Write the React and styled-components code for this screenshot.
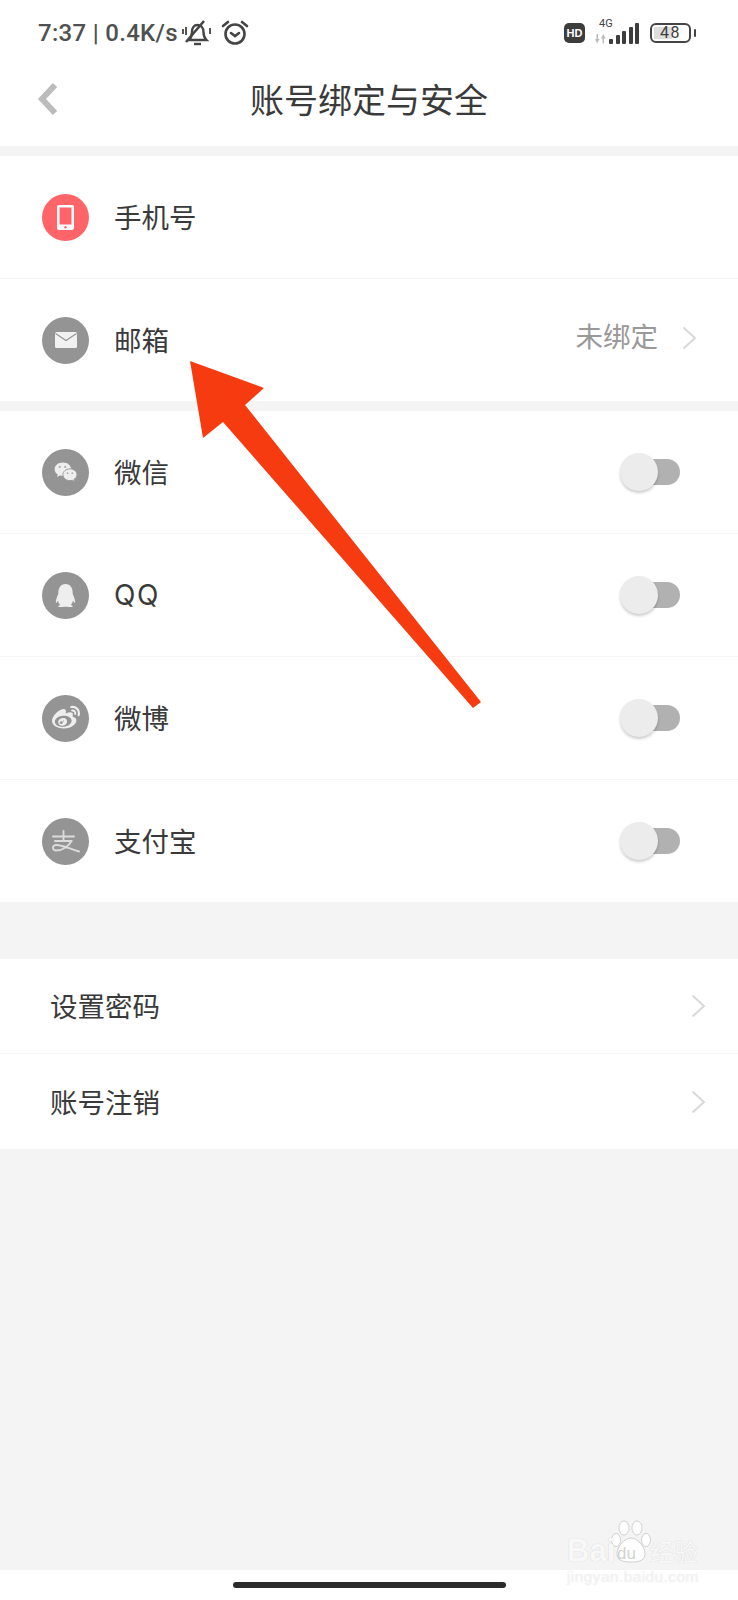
import React from 'react'
import styled, { createGlobalStyle } from 'styled-components'
import { FaQq, FaWeibo } from 'react-icons/fa'

const GlobalStyle = createGlobalStyle`
  html, body {
    margin: 0;
    padding: 0;
    background: #f4f4f4;
  }
  body {
    font-family: "Noto Sans CJK SC", "Noto Sans", sans-serif;
  }
`

const Page = styled.div`
  position: relative;
  width: 738px;
  height: 1600px;
  overflow: hidden;
  display: flex;
  flex-direction: column;
  background: #f4f4f4;
`

const Top = styled.header`
  background: #fff;
  height: 146px;
  flex: none;
`

const StatusBar = styled.div`
  height: 65px;
  padding: 0 47px 0 38px;
  display: flex;
  align-items: center;
  justify-content: space-between;
  color: #3d3d3d;
`

const StatusGroup = styled.div`
  display: flex;
  align-items: center;
`

const StatusText = styled.span`
  font-family: Roboto, "Liberation Sans", sans-serif;
  font-size: 24px;
  font-weight: 500;
  letter-spacing: 0.3px;
  line-height: 30px;
  color: #505050;
  margin-right: 3px;
`

const AlarmWrap = styled.span`
  display: flex;
  margin-left: 8px;
`

const HdBadge = styled.span`
  width: 21px;
  height: 20px;
  border-radius: 5px;
  background: #3d3d3d;
  color: #fff;
  font-family: "Liberation Sans", sans-serif;
  font-size: 11px;
  font-weight: 700;
  display: flex;
  align-items: center;
  justify-content: center;
`

const Signal = styled.div`
  position: relative;
  width: 45px;
  height: 23px;
  margin-left: 9px;
  display: flex;
  align-items: flex-end;
  justify-content: flex-end;
  gap: 2.5px;
`

const SignalLabel = styled.span`
  position: absolute;
  left: 5px;
  top: -4px;
  font-family: Roboto, sans-serif;
  font-size: 11px;
  line-height: 13px;
  color: #444;
`

const SignalArrows = styled.span`
  position: absolute;
  left: 0;
  bottom: 0;
  display: flex;
`

const SignalBar = styled.i`
  display: block;
  width: 4px;
  height: ${p => p.$h}px;
  border-radius: 1px;
  background: #3d3d3d;
`

const Battery = styled.div`
  position: relative;
  width: 37px;
  height: 16px;
  margin-left: 11px;
  border: 2.5px solid #454545;
  border-radius: 6px;
  display: flex;
  align-items: center;
  justify-content: center;
  font-family: Roboto, sans-serif;
  font-size: 16px;
  letter-spacing: 1.5px;
  color: #3d3d3d;

  &::before {
    content: '';
    position: absolute;
    left: 2px;
    top: 2px;
    bottom: 2px;
    width: 18px;
    background: #dedede;
  }

  &::after {
    content: '';
    position: absolute;
    right: -7px;
    top: 4px;
    width: 2.5px;
    height: 8px;
    border-radius: 1px;
    background: #454545;
  }
`

const BatteryLevel = styled.span`
  position: relative;
`

const NavBar = styled.div`
  position: relative;
  height: 81px;
  display: flex;
  align-items: flex-start;
  justify-content: center;
`

const BackIcon = styled.svg`
  position: absolute;
  left: 36px;
  top: 16px;
`

const Title = styled.h1`
  margin: 9px 0 0;
  font-size: 34px;
  font-weight: 400;
  line-height: 50px;
  color: #3a3a3a;
`

const Group = styled.section`
  background: #fff;
  margin-top: ${p => p.$top}px;
  flex: none;
`

const Row = styled.div`
  box-sizing: border-box;
  height: ${p => p.$height}px;
  padding: ${p => (p.$plain ? '0 32px 0 50px' : '0 32px 0 42px')};
  display: flex;
  align-items: center;
  border-bottom: 1px solid #f6f6f6;

  &:last-child {
    border-bottom: none;
  }
`

const IconCircle = styled.span`
  width: 47px;
  height: 47px;
  flex: none;
  margin-right: 25px;
  border-radius: 50%;
  background: ${p => p.$color || '#949494'};
  color: #fff;
  display: flex;
  align-items: center;
  justify-content: center;
`

const Label = styled.span`
  flex: 1;
  padding-bottom: 2px;
  font-size: 27.500px;
  line-height: 40px;
  color: #3a3a3a;
`

const LatinLabel = styled(Label)`
  padding-bottom: 0;
  font-family: Inter, "Noto Sans", sans-serif;
  font-size: 28px;
  letter-spacing: 1.500px;
`

const Value = styled.span`
  margin-right: 24px;
  margin-top: -10px;
  font-size: 27.500px;
  line-height: 40px;
  color: #999;
`

const Chevron = styled.svg`
  flex: none;
  margin-top: ${p => p.$shift || 0}px;
  margin-right: ${p => p.$inset || 0}px;
`

const Switch = styled.span`
  position: relative;
  width: 59px;
  height: 26px;
  margin-right: 26px;
  border-radius: 13px;
  background: #b1b1b1;
  flex: none;

  &::before {
    content: '';
    position: absolute;
    left: -1px;
    top: -6px;
    width: 38px;
    height: 38px;
    border-radius: 50%;
    background: #ececec;
    box-shadow: 0 2px 3px rgba(0, 0, 0, 0.2);
  }
`

const Filler = styled.div`
  flex: 1;
  background: #f4f4f4;
`

const HomeArea = styled.div`
  height: 30px;
  flex: none;
  background: #fff;
  display: flex;
  justify-content: center;
  padding-top: 12px;
  box-sizing: border-box;
`

const HomeBar = styled.span`
  width: 273px;
  height: 6px;
  border-radius: 3px;
  background: #2b2b2b;
`

const Callout = styled.svg`
  position: absolute;
  left: 0;
  top: 0;
  pointer-events: none;
`

const Watermark = styled.div`
  position: absolute;
  left: 567px;
  top: 1534px;
  width: 132px;
  color: rgba(255, 255, 255, 0.9);
  text-shadow: 0 0 1px rgba(170, 170, 170, 0.6);
`

const WatermarkLine = styled.div`
  position: relative;
  display: flex;
  align-items: center;
  height: 34px;
  font-family: "Liberation Sans", sans-serif;
  font-size: 31px;
  font-weight: 700;
  line-height: 34px;
`

const WatermarkDu = styled.span`
  position: absolute;
  left: 50px;
  top: 3px;
  z-index: 1;
  font-size: 17px;
  font-weight: 400;
  color: rgba(205, 205, 205, 0.9);
  text-shadow: none;
`

const WatermarkCn = styled.span`
  position: absolute;
  left: 83px;
  font-family: "Noto Sans CJK SC", sans-serif;
  font-size: 24px;
  font-weight: 400;
  white-space: nowrap;
`

const WatermarkPaw = styled.svg`
  position: absolute;
  left: 44px;
  top: -14px;
`

const WatermarkUrl = styled.div`
  font-family: "Liberation Sans", sans-serif;
  font-size: 15.500px;
  line-height: 18px;
  letter-spacing: 0.4px;
  white-space: nowrap;
  color: rgba(255, 255, 255, 0.6);
  text-shadow: 0 0 1px rgba(190, 190, 190, 0.5);
`

const MuteIcon = () => (
  <svg width="32" height="30" viewBox="0 0 32 30" fill="none" stroke="#454545" strokeWidth="2.4">
    <path d="M8 22c2-2 3-4 3-8 0-4 2-7 5.500-7s6 3 6 7c0 3 1 6 3 8z" />
    <path d="M5 24L23 3" strokeWidth="2.600" />
    <path d="M13 26h7" />
    <path d="M2 11v5M5 9v8M29 10v6" strokeWidth="1.800" />
  </svg>
)

const AlarmIcon = () => (
  <svg width="28" height="28" viewBox="0 0 28 28" fill="none" stroke="#454545" strokeWidth="2.600" strokeLinecap="round">
    <circle cx="14" cy="15" r="9.500" />
    <path d="M2 7l5-4M26 7l-5-4" />
    <path d="M10 14l4 3 4-3" />
  </svg>
)

const ArrowsIcon = () => (
  <svg width="12" height="10" viewBox="0 0 12 10" fill="#bbb">
    <path d="M1 5h1.500V0H4v5h1.500L3.200 9.500zM7 4.500h1.600v5H10v-5h1.500L9.300 0z" />
  </svg>
)

const BackArrow = () => (
  <BackIcon width="24" height="36" viewBox="0 0 24 36" fill="none">
    <path d="M19 4L6 18l13 14" stroke="#bcbcbc" strokeWidth="6" />
  </BackIcon>
)

const ChevronRight = ({ shift, inset }) => (
  <Chevron $shift={shift} $inset={inset} width="15" height="24" viewBox="0 0 15 24" fill="none">
    <path d="M1.500 1.500L13 12 1.500 22.500" stroke="#d9d9d9" strokeWidth="2" />
  </Chevron>
)

const PhoneIcon = () => (
  <svg width="17" height="25" viewBox="0 0 17 25" fill="none">
    <rect x="0" y="0" width="17" height="25" rx="2" fill="#fff" />
    <rect x="2.500" y="2.500" width="12" height="17" fill="#ff6468" />
    <circle cx="8.500" cy="22.200" r="1.200" fill="#ff6468" />
  </svg>
)

const MailIcon = () => (
  <svg width="22" height="16" viewBox="0 0 22 16">
    <rect x="0" y="0" width="22" height="16" rx="1.500" fill="#f1f1f1" />
    <path d="M0.500 1.500L11 8.500l10.500-7" fill="none" stroke="#949494" strokeWidth="1.100" />
  </svg>
)

const WechatIcon = () => (
  <svg width="26" height="22" viewBox="0 0 32 28">
    <path d="M12 2C6 2 1.500 5.700 1.500 10.500c0 2.800 1.500 5 4 6.700L4.500 20.500l3.800-2c1.300.4 2.500.5 3.700.5 6 0 10.500-3.700 10.500-8.500S18 2 12 2z" fill="#eee" />
    <path d="M21 10c-5 0-9 3.400-9 7.500s4 7.500 9 7.500c1 0 2-.1 3-.4l3 1.700-.8-2.900c2.300-1.400 3.800-3.500 3.800-5.900 0-4.100-4-7.500-9-7.500z" fill="#eee" stroke="#949494" strokeWidth="1.200" />
    <circle cx="8" cy="7.500" r="1.300" fill="#aaa" />
    <circle cx="15" cy="7.500" r="1.300" fill="#aaa" />
    <circle cx="18" cy="15.500" r="1.100" fill="#aaa" />
    <circle cx="24" cy="15.500" r="1.100" fill="#aaa" />
  </svg>
)

// the alipay mark, drawn as plain strokes
const AlipayIcon = () => (
  <svg width="29" height="23" viewBox="0 0 29 23" fill="none" stroke="#dcdcdc" strokeWidth="1.900" strokeLinecap="round">
    <path d="M2 6.500h21M12.500 1v10M4 11h16.500" />
    <path d="M20.500 11c-3 5.500-9 9.500-15 9.500-4.500 0-5-5.500 0-5.500 6 0 14 4 22.500 6.500" />
  </svg>
)

const toggleRows = [
  { label: '微信', icon: <WechatIcon />, height: 123 },
  { label: 'QQ', icon: <FaQq size={23} color="#eee" />, height: 123, latin: true },
  { label: '微博', icon: <FaWeibo size={28} color="#eee" />, height: 123 },
  { label: '支付宝', icon: <AlipayIcon />, height: 122 }
]

const App = () => (
  <Page>
    <GlobalStyle />
    <Top>
      <StatusBar>
        <StatusGroup>
          <StatusText>7:37 | 0.4K/s</StatusText>
          <MuteIcon />
          <AlarmWrap><AlarmIcon /></AlarmWrap>
        </StatusGroup>
        <StatusGroup>
          <HdBadge>HD</HdBadge>
          <Signal>
            <SignalLabel>4G</SignalLabel>
            <SignalArrows><ArrowsIcon /></SignalArrows>
            <SignalBar $h={5} />
            <SignalBar $h={9} />
            <SignalBar $h={13} />
            <SignalBar $h={17} />
            <SignalBar $h={21} />
          </Signal>
          <Battery><BatteryLevel>48</BatteryLevel></Battery>
        </StatusGroup>
      </StatusBar>
      <NavBar>
        <BackArrow />
        <Title>账号绑定与安全</Title>
      </NavBar>
    </Top>

    <Group $top={10}>
      <Row $height={123}>
        <IconCircle $color="#ff6468"><PhoneIcon /></IconCircle>
        <Label>手机号</Label>
      </Row>
      <Row $height={122}>
        <IconCircle><MailIcon /></IconCircle>
        <Label>邮箱</Label>
        <Value>未绑定</Value>
        <ChevronRight shift={-4} inset={9} />
      </Row>
    </Group>

    <Group $top={10}>
      {toggleRows.map(r => {
        const Text = r.latin ? LatinLabel : Label
        return (
          <Row key={r.label} $height={r.height}>
            <IconCircle>{r.icon}</IconCircle>
            <Text>{r.label}</Text>
            <Switch />
          </Row>
        )
      })}
    </Group>

    <Group $top={57}>
      <Row $plain $height={95}>
        <Label>设置密码</Label>
        <ChevronRight />
      </Row>
      <Row $plain $height={95}>
        <Label>账号注销</Label>
        <ChevronRight />
      </Row>
    </Group>

    <Filler />
    <HomeArea><HomeBar /></HomeArea>

    <Callout width="738" height="1600" viewBox="0 0 738 1600">
      <polygon points="190,361 264,388 245,405 481,702 473,708 223,422 203,438" fill="#f73b10" />
    </Callout>

    <Watermark>
      <WatermarkPaw width="40" height="44" viewBox="0 0 40 44" fill="rgba(255,255,255,0.9)" stroke="rgba(170,170,170,0.5)">
        <ellipse cx="13" cy="8" rx="5" ry="7" />
        <ellipse cx="26" cy="8" rx="5" ry="7" />
        <ellipse cx="5" cy="20" rx="4.500" ry="6.500" />
        <ellipse cx="35" cy="20" rx="4.500" ry="6.500" />
        <path d="M20 18c-6 0-14 8-14 16 0 6 5 8 14 8s14-2 14-8c0-8-8-16-14-16z" />
      </WatermarkPaw>
      <WatermarkLine>
        Bai
        <WatermarkDu>du</WatermarkDu>
        <WatermarkCn>经验</WatermarkCn>
      </WatermarkLine>
      <WatermarkUrl>jingyan.baidu.com</WatermarkUrl>
    </Watermark>
  </Page>
)

export default App
